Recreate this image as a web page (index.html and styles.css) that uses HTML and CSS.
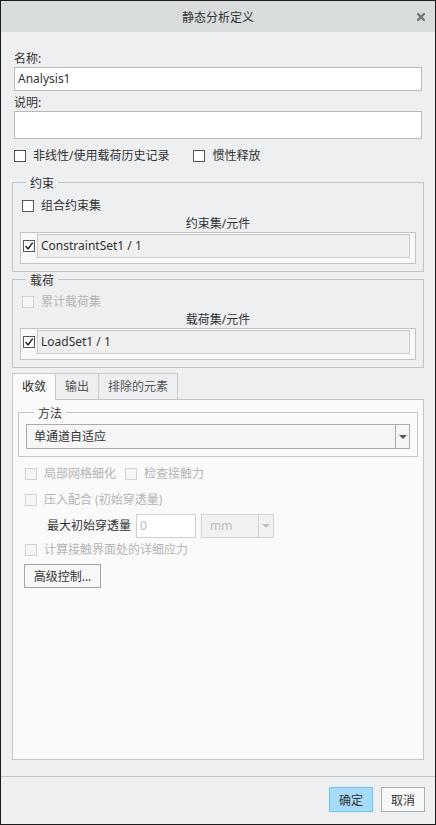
FILE: index.html
```html
<!DOCTYPE html>
<html lang="zh-CN">
<head>
    <meta charset="UTF-8">
    <meta name="viewport" content="width=device-width, initial-scale=1.0">
    <title>静态分析定义</title>
    <link rel="stylesheet" href="styles.css">
</head>
<body>
    <div class="dialog">
        <div class="titlebar">
            <span class="title">静态分析定义</span>
            <svg class="close" width="8" height="8" viewBox="0 0 8 8">
                <path d="M1 1 L7 7 M7 1 L1 7" stroke="#777" stroke-width="2.4" stroke-linecap="square"/>
            </svg>
        </div>

        <div class="content">
            <div class="label first">名称:</div>
            <div class="input">Analysis1</div>
            <div class="label">说明:</div>
            <div class="input textarea"></div>

            <div class="row options">
                <label class="check"><span class="cb"></span>非线性/使用载荷历史记录</label>
                <label class="check inertia"><span class="cb"></span>惯性释放</label>
            </div>

            <fieldset class="group constraints">
                <legend>约束</legend>
                <label class="check inset"><span class="cb"></span>组合约束集</label>
                <div class="list-title">约束集/元件</div>
                <div class="list">
                    <div class="list-item">
                        <span class="cb checked">
                            <svg width="10" height="10" viewBox="0 0 10 10"><path d="M1.5 5 L4 7.8 L8.8 1.6" fill="none" stroke="#222" stroke-width="1.4"/></svg>
                        </span>
                        <span class="item-text">ConstraintSet1 / 1</span>
                    </div>
                </div>
            </fieldset>

            <fieldset class="group loads">
                <legend>载荷</legend>
                <label class="check inset disabled"><span class="cb"></span>累计载荷集</label>
                <div class="list-title">载荷集/元件</div>
                <div class="list">
                    <div class="list-item">
                        <span class="cb checked">
                            <svg width="10" height="10" viewBox="0 0 10 10"><path d="M1.5 5 L4 7.8 L8.8 1.6" fill="none" stroke="#222" stroke-width="1.4"/></svg>
                        </span>
                        <span class="item-text">LoadSet1 / 1</span>
                    </div>
                </div>
            </fieldset>

            <div class="tabs">
                <div class="tab active">收敛</div>
                <div class="tab">输出</div>
                <div class="tab">排除的元素</div>
            </div>
            <div class="tab-panel">
                <fieldset class="group method">
                    <legend>方法</legend>
                    <div class="select">
                        <span class="select-text">单通道自适应</span>
                        <span class="select-arrow"><span class="tri"></span></span>
                    </div>
                </fieldset>

                <div class="row panel-row first-row">
                    <label class="check disabled"><span class="cb"></span>局部网格细化</label>
                    <label class="check disabled contact"><span class="cb"></span>检查接触力</label>
                </div>
                <div class="row panel-row second-row">
                    <label class="check disabled"><span class="cb"></span>压入配合 (初始穿透量)</label>
                </div>
                <div class="row penetration">
                    <span class="pen-label">最大初始穿透量</span>
                    <div class="input small disabled-input">0</div>
                    <div class="select unit disabled-select">
                        <span class="select-text">mm</span>
                        <span class="select-arrow"><span class="tri"></span></span>
                    </div>
                </div>
                <div class="row panel-row fourth-row">
                    <label class="check disabled"><span class="cb"></span>计算接触界面处的详细应力</label>
                </div>
                <button class="btn advanced">高级控制...</button>
            </div>
        </div>

        <div class="footer">
            <button class="btn primary">确定</button>
            <button class="btn">取消</button>
        </div>
    </div>
</body>
</html>
```

FILE: styles.css
```css
* {
    box-sizing: border-box;
    margin: 0;
    padding: 0;
}

body {
    margin: 0;
    font-family: "Noto Sans", "Noto Sans CJK SC", sans-serif;
    font-size: 12px;
    color: #333;
    background: #fff;
}

.dialog {
    width: 436px;
    height: 825px;
    border: 1px solid #1c1c1c;
    background: #eeeff1;
    display: flex;
    flex-direction: column;
}

/* title bar */
.titlebar {
    height: 31px;
    flex: none;
    background: #d9dcdd;
    display: flex;
    align-items: center;
    justify-content: center;
    position: relative;
}

.title {
    line-height: 31px;
    padding-top: 1px;
    color: #333;
}

.close {
    position: absolute;
    right: 10px;
    top: 12px;
}

/* main area */
.content {
    flex: 1;
    display: flex;
    flex-direction: column;
    padding: 19px 11px 16px 11px;
}

.label {
    line-height: 16px;
    margin: 4px 2px 0;
}

.label.first {
    margin-top: 0;
}

.input {
    height: 24px;
    margin: 0 2px;
    border: 1px solid #b9b9b9;
    background: #fff;
    line-height: 22px;
    padding-left: 3px;
    color: #333;
}

.input.textarea {
    height: 28px;
}

.row {
    display: flex;
    align-items: center;
}

.options {
    margin: 9px 2px 0;
}

.check {
    display: flex;
    align-items: center;
    gap: 7px;
    height: 16px;
    line-height: 16px;
    white-space: nowrap;
}

.inertia {
    margin-left: 24px;
}

.cb {
    width: 12px;
    height: 12px;
    flex: none;
    border: 1px solid #555;
    background: #fff;
    display: flex;
    align-items: center;
    justify-content: center;
}

.check.disabled {
    color: #b5b5b5;
}

.check.disabled .cb {
    border-color: #d3d3d3;
    background: #f6f6f6;
}

/* group boxes */
.group {
    border: 1px solid #c5c5c5;
    padding: 8px 7px 7px;
    min-width: 0;
}

.group legend {
    padding: 4px 4px 0;
    line-height: 12px;
    margin-left: 6px;
    color: #333;
}

.constraints {
    margin-top: 10px;
}

.loads {
    margin-top: -1px;
    padding-top: 7px;
}

.check.inset {
    margin-left: 2px;
}

.list-title {
    text-align: center;
    line-height: 16px;
    margin-top: 2px;
}

.list {
    height: 32px;
    border: 1px solid #c4c4c4;
    background: #f9f9f9;
    padding: 1px 5px 0 2px;
}

.list-item {
    display: flex;
    align-items: center;
    gap: 2px;
}

.item-text {
    flex: 1;
    height: 24px;
    border: 1px solid #c9c9c9;
    background: #f0f0f0;
    line-height: 22px;
    padding-left: 3px;
}

/* tabs */
.tabs {
    display: flex;
    align-items: flex-start;
    margin-top: 5px;
    position: relative;
    z-index: 1;
}

.tab {
    height: 26px;
    line-height: 25px;
    padding: 0 9px;
    border: 1px solid #cacaca;
    border-bottom: none;
    background: #eeeff1;
    color: #555;
    margin-left: -1px;
}

.tab:first-child {
    margin-left: 0;
}

.tab.active {
    height: 27px;
    background: #fafafa;
    color: #222;
    width: 44px;
}

.tab-panel {
    flex: 1;
    display: flex;
    flex-direction: column;
    margin-top: -1px;
    border: 1px solid #c5c5c5;
    background: #fafafa;
    padding: 4px 5px 0;
}

.method {
    padding: 4px 7px 7px;
}

.method legend {
    margin-left: 8px;
}

.select {
    height: 25px;
    border: 1px solid #ababab;
    background: #f6f6f6;
    display: flex;
    align-items: stretch;
}

.select-text {
    flex: 1;
    line-height: 23px;
    padding-left: 7px;
}

.select-arrow {
    width: 14px;
    border-left: 1px solid #ababab;
    display: flex;
    align-items: center;
    justify-content: center;
}

.tri {
    width: 0;
    height: 0;
    border-left: 4px solid transparent;
    border-right: 4px solid transparent;
    border-top: 4px solid #555;
}

.panel-row {
    margin-left: 7px;
}

.first-row {
    margin-top: 9px;
}

.second-row {
    margin-top: 10px;
}

.contact {
    margin-left: 9px;
}

.penetration {
    margin-top: 6px;
    margin-left: 29px;
}

.pen-label {
    margin-right: 5px;
    padding-bottom: 3px;
}

.input.small {
    width: 60px;
    margin: 0;
    padding-left: 3px;
}

.disabled-input {
    border-color: #d0d0d0;
    color: #bbb;
}

.unit {
    width: 73px;
    height: 24px;
    margin-left: 5px;
}

.disabled-select {
    border-color: #d3d3d3;
    background: #f1f1f1;
    color: #bbb;
}

.disabled-select .select-text {
    padding-left: 8px;
    line-height: 22px;
}

.disabled-select .select-arrow {
    width: 15px;
    border-left-color: #d3d3d3;
}

.disabled-select .tri {
    border-top-color: #c0c0c0;
}

.fourth-row {
    margin-top: 4px;
}

/* buttons */
.btn {
    font-family: inherit;
    font-size: 12px;
    color: #333;
    height: 25px;
    padding: 0 8px;
    border: 1px solid #adadad;
    background: #f7f7f7;
    cursor: pointer;
}

.advanced {
    align-self: flex-start;
    width: 77px;
    height: 24px;
    margin: 6px 0 0 6px;
    padding: 0;
    border-color: #a5a5a5;
}

.footer {
    flex: none;
    border-top: 1px solid #c6c6c6;
    display: flex;
    justify-content: flex-end;
    gap: 8px;
    padding: 10px 10px 12px;
}

.footer .btn {
    width: 44px;
    padding: 0;
}

.btn.primary {
    background: #a6dcfa;
    border-color: #6cc6f3;
}
```
